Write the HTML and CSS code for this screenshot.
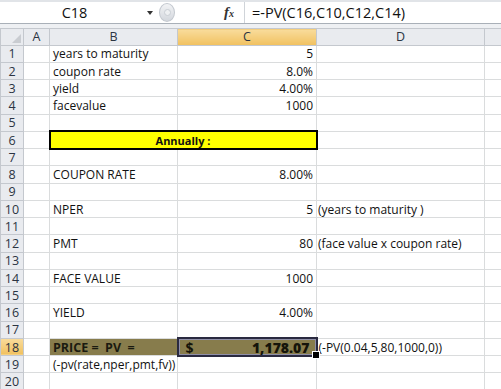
FILE: index.html
```html
<!DOCTYPE html>
<html>
    <head>
        <meta charset="UTF-8">
        <title>Bond price - PV</title>
    <link rel="stylesheet" href="styles.css">
    </head>
    <body>
        <!-- 수식 입력줄 -->
        <div class="formulaBar">
            <div class="nameBox"><span>C18</span><i class="arrow"></i></div>
            <div class="splitter"><i></i></div>
            <div class="fx">f<sub>x</sub></div>
            <div class="formula">=-PV(C16,C10,C12,C14)</div>
        </div>
        <div class="gap"></div>

        <!-- 시트 -->
        <div class="sheetWrap">
        <table class="sheet">
            <colgroup>
                <col class="cRow"><col class="cA"><col class="cB"><col class="cC"><col class="cD"><col class="cE">
            </colgroup>
            <tr class="head">
                <th class="corner"><i></i></th><th>A</th><th>B</th><th class="sel">C</th><th>D</th><th></th>
            </tr>
            <tr><th>1</th><td></td><td>years to maturity</td><td class="num">5</td><td></td><td></td></tr>
            <tr><th>2</th><td></td><td>coupon rate</td><td class="num">8.0%</td><td></td><td></td></tr>
            <tr><th>3</th><td></td><td>yield</td><td class="num">4.00%</td><td></td><td></td></tr>
            <tr><th>4</th><td></td><td>facevalue</td><td class="num">1000</td><td></td><td></td></tr>
            <tr><th>5</th><td></td><td></td><td></td><td></td><td></td></tr>
            <tr><th>6</th><td></td><td colspan="2" class="annual">Annually :</td><td></td><td></td></tr>
            <tr><th>7</th><td></td><td></td><td></td><td></td><td></td></tr>
            <tr><th>8</th><td></td><td>COUPON RATE</td><td class="num">8.00%</td><td></td><td></td></tr>
            <tr><th>9</th><td></td><td></td><td></td><td></td><td></td></tr>
            <tr><th>10</th><td></td><td>NPER</td><td class="num">5</td><td class="note">(years to maturity )</td><td></td></tr>
            <tr><th>11</th><td></td><td></td><td></td><td></td><td></td></tr>
            <tr><th>12</th><td></td><td>PMT</td><td class="num">80</td><td class="note">(face value x coupon rate)</td><td></td></tr>
            <tr><th>13</th><td></td><td></td><td></td><td></td><td></td></tr>
            <tr><th>14</th><td></td><td>FACE VALUE</td><td class="num">1000</td><td></td><td></td></tr>
            <tr><th>15</th><td></td><td></td><td></td><td></td><td></td></tr>
            <tr><th>16</th><td></td><td>YIELD</td><td class="num">4.00%</td><td></td><td></td></tr>
            <tr><th>17</th><td></td><td></td><td></td><td></td><td></td></tr>
            <tr><th class="sel">18</th><td></td><td class="price">PRICE =&nbsp; PV&nbsp; =</td>
                <td class="result"><span>$</span><b>1,178.07</b></td><td class="note">(-PV(0.04,5,80,1000,0))</td><td></td></tr>
            <tr><th>19</th><td></td><td>(-pv(rate,nper,pmt,fv))</td><td></td><td></td><td></td></tr>
            <tr><th>20</th><td></td><td></td><td></td><td></td><td></td></tr>
        </table>
        </div>
    </body>
</html>
```

FILE: styles.css
```css
:root{ /* 엑셀 2010 색상 */
    --grid: #dadcdd;
    --headBg: #e9ebef;
    --headLine: #c4c8ce;
    --selTop: #f9dc9c;
    --selBottom: #f1c15f;
    --olive: #877c4c;
}

*{box-sizing: border-box;}

body{
    margin: 0;
    width: 501px;
    height: 389px;
    overflow: hidden;
    background: white;
    font-family: "Open Sans", "Noto Sans", sans-serif;
    color: #111;
}

/*------------수식 입력줄------------*/
.formulaBar{
    display: flex;
    align-items: center;
    height: 24px;
    border-top: 2px solid #e1e4e8;
    border-bottom: 1px solid #a9b0b8;
    background: white;
    font-size: 14.5px;
}
.nameBox{
    display: flex;
    align-items: center;
    width: 157px;
    height: 100%;
}
.nameBox span{
    flex: 1;
    text-align: center;
    padding-left: 2px;
}
.arrow{
    width: 0;
    height: 0;
    margin-right: 4px;
    border-left: 3px solid transparent;
    border-right: 3px solid transparent;
    border-top: 4px solid #333;
}
.splitter{
    width: 16px;
    height: 19px;
    margin-left: 2px;
    margin-right: 2px;
    border-radius: 50%;
    background: linear-gradient(#f2f3f5, #d3d7dd);
    border: 1px solid #c3c8cf;
    display: flex;
    align-items: center;
    justify-content: center;
}
.splitter i{
    width: 7px;
    height: 7px;
    border-radius: 50%;
    background: #eef0f2;
    border: 1px solid #c9ced4;
}
.fx{
    width: 68px;
    height: 100%;
    text-align: right;
    padding-right: 10px;
    border-right: 1px solid #d0d4d9;
    font-family: "Liberation Serif", serif;
    font-style: italic;
    font-weight: bold;
    font-size: 15px;
    line-height: 21px;
    color: #333;
}
.fx sub{
    font-size: 10px;
    vertical-align: 0;
}
.formula{
    padding-left: 7px;
}
.gap{
    height: 4px;
    background: #eef0f3;
}

/*------------시트------------*/
.sheetWrap{
    width: 501px;
    overflow: hidden;
}
.sheet{
    table-layout: fixed;
    border-collapse: collapse;
    width: 530px;
    font-size: 12px;
}
.cRow{width: 23px;}
.cA{width: 26px;}
.cB{width: 128px;}
.cC{width: 139px;}
.cD{width: 168px;}
.cE{width: 46px;}

.sheet tr{height: 17.25px;}
.sheet tr.head{height: 16.7px;}
.sheet td{
    border: 1px solid var(--grid);
    padding: 0 3px;
    white-space: nowrap;
    overflow: visible;
    line-height: 15px;
}
.sheet th{
    border: 1px solid var(--headLine);
    background: var(--headBg);
    font-weight: normal;
    font-size: 12.5px;
    color: #2b3442;
    padding: 0;
    line-height: 15px;
}
.sheet th.sel{
    background: linear-gradient(var(--selTop), var(--selBottom));
}
.corner{
    position: relative;
}
.corner i{ /* 왼쪽 위 삼각형 */
    position: absolute;
    right: 2px;
    bottom: 2px;
    width: 0;
    height: 0;
    border-left: 9px solid transparent;
    border-bottom: 9px solid #c9ccd1;
}

.num{text-align: right;}
.note{padding-left: 1px !important;}

.annual{
    border: 2px solid black !important;
    background: #ffff00;
    text-align: center;
    font-weight: bold;
    font-size: 11px;
}
.price{
    background: var(--olive);
    font-weight: bold;
    font-size: 12.5px;
    color: #1a1a10;
}
.result{
    position: relative;
    background: var(--olive);
    border: 2px solid #2a2a40 !important;
    box-shadow: inset 0 0 0 1px #8f8fa8;
    font-weight: bold;
    font-size: 14px;
    color: #15140a;
    padding-right: 6px !important;
}
.result span{float: left; padding-left: 4px;}
.result b{float: right;}
.result::after{ /* 채우기 핸들 */
    content: "";
    position: absolute;
    right: -4px;
    bottom: -4px;
    width: 6px;
    height: 6px;
    background: black;
    border: 1px solid white;
}
```
